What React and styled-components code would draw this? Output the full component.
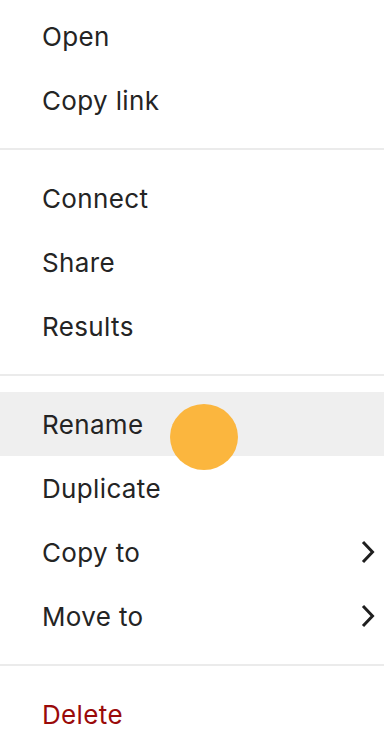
import React from 'react';
import styled, { createGlobalStyle } from 'styled-components';

const GlobalStyle = createGlobalStyle`
  html, body {
    margin: 0;
    padding: 0;
    background: #ffffff;
  }
  body {
    font-family: Inter, "Noto Sans", "Liberation Sans", sans-serif;
    -webkit-font-smoothing: antialiased;
  }
`;

const groups = [
  [{ label: 'Open' }, { label: 'Copy link' }],
  [{ label: 'Connect' }, { label: 'Share' }, { label: 'Results' }],
  [
    { label: 'Rename', active: true, touch: true },
    { label: 'Duplicate' },
    { label: 'Copy to', submenu: true },
    { label: 'Move to', submenu: true },
  ],
  [{ label: 'Delete', danger: true }],
];

const Chevron = () => (
  <svg width="14" height="24" viewBox="0 0 14 24" fill="none">
    <path
      d="M2 2 L11.5 12 L2 22"
      stroke="#1f1f1f"
      strokeWidth="3"
      strokeLinecap="butt"
      strokeLinejoin="miter"
    />
  </svg>
);

const App = () => (
  <>
    <GlobalStyle />
    <Menu>
      {groups.map((group, gi) => (
        <React.Fragment key={gi}>
          {gi > 0 && <Divider />}
          {group.map((item) => (
            <Item key={item.label} $active={item.active}>
              <Label $danger={item.danger}>{item.label}</Label>
              {item.submenu && (
                <Arrow>
                  <Chevron />
                </Arrow>
              )}
              {item.touch && <Touch />}
            </Item>
          ))}
        </React.Fragment>
      ))}
    </Menu>
  </>
);

const Menu = styled.div`
  width: 384px;
  height: 750px;
  padding-top: 4px;
  box-sizing: border-box;
  display: flex;
  flex-direction: column;
  background: #ffffff;
  overflow: hidden;
`;

const Item = styled.div`
  position: relative;
  height: 64px;
  flex-shrink: 0;
  display: flex;
  align-items: center;
  padding: 0 9px 0 42px;
  background: ${(p) => (p.$active ? '#efefef' : 'transparent')};
`;

const Label = styled.span`
  flex: 1;
  font-size: 26px;
  letter-spacing: 0.35px;
  color: ${(p) => (p.$danger ? '#9a0a0a' : '#242424')};
`;

const Arrow = styled.span`
  display: flex;
  align-items: center;
`;

const Divider = styled.div`
  flex-shrink: 0;
  height: 2px;
  margin: 16px 0;
  background: #ebebeb;
`;

const Touch = styled.span`
  position: absolute;
  left: 170px;
  top: 12px;
  width: 68px;
  height: 66px;
  border-radius: 50%;
  background: rgba(251, 178, 52, 0.95);
  z-index: 1;
`;

export default App;
